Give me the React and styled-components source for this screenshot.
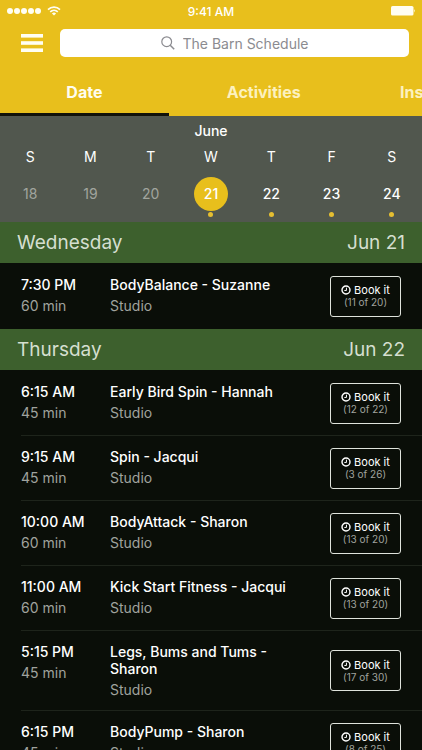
import React from "react";
import styled, { createGlobalStyle } from "styled-components";

const GlobalStyle = createGlobalStyle`
  *, *::before, *::after { box-sizing: border-box; }
  html, body, #root { height: 100%; }
  body {
    margin: 0;
    background: #0a0e08;
    color: #fff;
    font-family: Inter, "Liberation Sans", sans-serif;
  }
  button, input { font: inherit; color: inherit; }
`;

const Screen = styled.div`
  display: flex;
  flex-direction: column;
  height: 100%;
  overflow: hidden;
`;

const TopArea = styled.header`
  flex: none;
  background: #e8bf1c;
`;

const StatusBar = styled.div`
  display: grid;
  grid-template-columns: 1fr auto 1fr;
  align-items: center;
  height: 22px;
  padding: 0 6px;
  font-size: 12px;
  font-weight: 500;
`;

const Signal = styled.div`
  display: flex;
  align-items: center;
  gap: 5px;
`;

const Battery = styled.svg`
  justify-self: end;
`;

const SearchRow = styled.div`
  display: flex;
  align-items: center;
  gap: 17px;
  padding: 7px 13px 11px 21px;
`;

const MenuButton = styled.button`
  display: flex;
  flex: none;
  padding: 0;
  border: 0;
  background: none;
`;

const SearchField = styled.label`
  display: flex;
  flex: 1;
  align-items: center;
  justify-content: center;
  gap: 8px;
  height: 28px;
  border-radius: 5px;
  background: #fff;
  color: #8b8b90;
`;

const SearchInput = styled.input`
  width: 126px;
  padding: 0;
  border: 0;
  outline: 0;
  background: none;
  font-size: 14px;
  &::placeholder { color: #8b8b90; opacity: 1; }
`;

const Tabs = styled.nav`
  display: flex;
  overflow: hidden;
`;

const Tab = styled.button`
  flex: 0 0 ${(p) => p.$basis};
  height: 48px;
  padding: 3px 0 0;
  border: 0;
  border-bottom: 3px solid ${(p) => (p.$active ? "#11120a" : "transparent")};
  background: none;
  color: ${(p) => (p.$active ? "#fffdf0" : "#fcf1bf")};
  font-size: 16px;
  font-weight: 700;
`;

const Calendar = styled.section`
  flex: none;
  padding-top: 6px;
  background: #51574e;
`;

const Month = styled.h2`
  margin: 0;
  font-size: 14px;
  font-weight: 500;
  line-height: 18px;
  text-align: center;
`;

const Week = styled.div`
  display: grid;
  grid-template-columns: repeat(7, 1fr);
`;

const Weekday = styled.div`
  padding-top: 8px;
  font-size: 14px;
  line-height: 18px;
  text-align: center;
`;

const Day = styled.button`
  display: flex;
  flex-direction: column;
  align-items: center;
  gap: 1px;
  height: 56px;
  padding: 11px 0 0;
  border: 0;
  background: none;
  color: ${(p) => (p.$past ? "#a1a59e" : "#fff")};
  font-size: 14px;
  font-weight: ${(p) => (p.$past ? 400 : 500)};
`;

const DayNumber = styled.span`
  width: 34px;
  border-radius: 50%;
  background: ${(p) => (p.$selected ? "#e8bf1c" : "transparent")};
  line-height: 34px;
`;

const Dot = styled.span`
  width: 5px;
  height: 5px;
  border-radius: 50%;
  background: #e5bf31;
`;

const Schedule = styled.main`
  flex: 1;
  min-height: 0;
  overflow: hidden;
`;

const SectionHeader = styled.h2`
  display: flex;
  justify-content: space-between;
  margin: 0;
  padding: 1px 17px 0;
  background: #3d602d;
  color: #d5dfd0;
  font-size: 19px;
  font-weight: 400;
  line-height: 40px;
`;

const ClassList = styled.ul`
  margin: 0;
  padding: 1px 0 0 21px;
  list-style: none;
`;

const ClassRow = styled.li`
  display: grid;
  grid-template-columns: 74px 1fr auto;
  align-items: center;
  column-gap: 15px;
  min-height: 65px;
  padding: 12px 21px 12px 0;
  border-bottom: 1px solid #1e241b;
  &:last-child { border-bottom-color: transparent; }
`;

const Info = styled.div`
  align-self: start;
`;

const Title = styled.div`
  font-size: 14px;
  font-weight: 500;
  line-height: 17px;
  white-space: ${(p) => (p.$nowrap ? "nowrap" : "normal")};
`;

const Meta = styled.div`
  margin-top: 4px;
  color: #a0a39e;
  font-size: 14px;
  line-height: 17px;
`;

const BookButton = styled.button`
  display: flex;
  flex-direction: column;
  align-items: center;
  justify-content: center;
  width: 71px;
  height: 41px;
  margin: -1px 0;
  padding: 0;
  border: 1px solid #dfe3dc;
  border-radius: 3px;
  background: none;
  font-size: 11px;
  line-height: 12px;
`;

const BookLabel = styled.span`
  display: flex;
  align-items: center;
  gap: 3px;
`;

const Places = styled.span`
  color: #a0a39e;
  font-size: 10px;
`;

const days = [
  { n: 18, past: true },
  { n: 19, past: true },
  { n: 20, past: true },
  { n: 21, selected: true },
  { n: 22 },
  { n: 23 },
  { n: 24 },
];

const sections = [
  {
    day: "Wednesday",
    date: "Jun 21",
    classes: [["7:30 PM", "60 min", "BodyBalance - Suzanne", "11 of 20"]],
  },
  {
    day: "Thursday",
    date: "Jun 22",
    classes: [
      ["6:15 AM", "45 min", "Early Bird Spin - Hannah", "12 of 22"],
      ["9:15 AM", "45 min", "Spin - Jacqui", "3 of 26"],
      ["10:00 AM", "60 min", "BodyAttack - Sharon", "13 of 20"],
      ["11:00 AM", "60 min", "Kick Start Fitness - Jacqui", "13 of 20"],
      ["5:15 PM", "45 min", "Legs, Bums and Tums - Sharon", "17 of 30"],
      ["6:15 PM", "45 min", "BodyPump - Sharon", "8 of 25"],
    ],
  },
];

function ClockIcon() {
  return (
    <svg width="10" height="10" viewBox="0 0 18 18" fill="none" stroke="currentColor" aria-hidden="true">
      <circle cx="9" cy="9" r="7.2" strokeWidth="2.6" />
      <path d="M9.8 4.8v5H6" strokeWidth="1.8" />
    </svg>
  );
}

function ClassItem({ item }) {
  const [time, length, title, places] = item;
  return (
    <ClassRow>
      <Info>
        <Title $nowrap>{time}</Title>
        <Meta>{length}</Meta>
      </Info>
      <Info>
        <Title>{title}</Title>
        <Meta>Studio</Meta>
      </Info>
      <BookButton type="button">
        <BookLabel>
          <ClockIcon />
          Book it
        </BookLabel>
        <Places>({places})</Places>
      </BookButton>
    </ClassRow>
  );
}

export default function App() {
  return (
    <Screen>
      <GlobalStyle />
      <TopArea>
        <StatusBar>
          <Signal>
            <svg width="36" height="8" viewBox="0 0 36 8" fill="#fffef2" aria-hidden="true">
              {[4, 11, 18, 25, 32].map((x) => (
                <circle key={x} cx={x} cy="4" r="3" />
              ))}
            </svg>
            <svg width="14" height="10" viewBox="0 0 14 10" fill="none" stroke="#fffef2" aria-hidden="true">
              <path d="M1 3.6a8.6 8.6 0 0 1 12 0" strokeWidth="1.7" />
              <path d="M3.2 5.9a5.5 5.5 0 0 1 7.6 0" strokeWidth="1.6" />
              <path d="M7 9.6 4.9 7.5a3 3 0 0 1 4.2 0z" fill="#fffef2" stroke="none" />
            </svg>
          </Signal>
          <span>9:41 AM</span>
          <Battery width="26" height="12" viewBox="0 0 26 12" fill="#fffef2" aria-hidden="true">
            <rect x="1" y="1" width="22.5" height="9.6" rx="1.6" />
            <path d="M24.2 4q1.6 1.8 0 3.6z" />
          </Battery>
        </StatusBar>
        <SearchRow>
          <MenuButton type="button" aria-label="Menu">
            <svg width="22" height="18" viewBox="0 0 22 18" fill="#fffef2" aria-hidden="true">
              <rect width="22" height="3.6" />
              <rect y="7.2" width="22" height="3.6" />
              <rect y="14.4" width="22" height="3.6" />
            </svg>
          </MenuButton>
          <SearchField>
            <svg width="14" height="14" viewBox="0 0 14 14" fill="none" stroke="currentColor" strokeWidth="1.2" aria-hidden="true">
              <circle cx="5.7" cy="5.7" r="4.9" />
              <path d="m9.2 9.2 4 4" strokeWidth="1.5" />
            </svg>
            <SearchInput type="text" aria-label="Search" placeholder="The Barn Schedule" />
          </SearchField>
        </SearchRow>
        <Tabs>
          <Tab type="button" $basis="40%" $active>Date</Tab>
          <Tab type="button" $basis="45%">Activities</Tab>
          <Tab type="button" $basis="40%">Instructors</Tab>
        </Tabs>
      </TopArea>
      <Calendar>
        <Month>June</Month>
        <Week>
          {["S", "M", "T", "W", "T", "F", "S"].map((d, i) => (
            <Weekday key={i}>{d}</Weekday>
          ))}
          {days.map((d) => (
            <Day key={d.n} type="button" $past={d.past}>
              <DayNumber $selected={d.selected}>{d.n}</DayNumber>
              {!d.past && <Dot />}
            </Day>
          ))}
        </Week>
      </Calendar>
      <Schedule>
        {sections.map((s) => (
          <section key={s.day}>
            <SectionHeader>
              <span>{s.day}</span>
              <span>{s.date}</span>
            </SectionHeader>
            <ClassList>
              {s.classes.map((c) => (
                <ClassItem key={c[0]} item={c} />
              ))}
            </ClassList>
          </section>
        ))}
      </Schedule>
    </Screen>
  );
}
